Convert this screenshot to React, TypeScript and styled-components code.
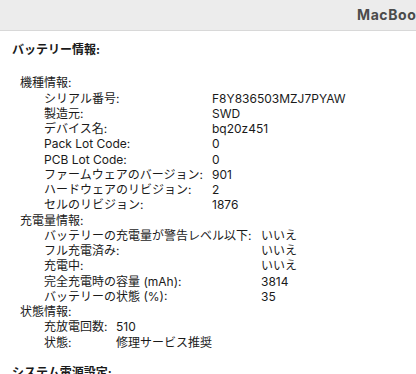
import React from "react";
import styled, { createGlobalStyle } from "styled-components";

const Global = createGlobalStyle`
  html, body { margin: 0; padding: 0; background: #ffffff; }
  body {
    font-family: "Inter", "Noto Sans CJK JP", sans-serif;
    font-size: 12px;
    color: #1a1a1a;
    -webkit-font-smoothing: antialiased;
  }
`;

const Window = styled.div`
  width: 416px;
  height: 374px;
  overflow: hidden;
  background: #ffffff;
  display: flex;
  flex-direction: column;
`;

const TitleBar = styled.div`
  flex: 0 0 30px;
  height: 30px;
  background: #ececec;
  border-bottom: 1px solid #d8d8d8;
  display: flex;
  align-items: center;
  padding-left: 357px;
  overflow: hidden;
  white-space: nowrap;
`;

const WindowTitle = styled.span`
  font-family: "Inter", "Liberation Sans", sans-serif;
  font-weight: 700;
  font-size: 14px;
  letter-spacing: 0.6px;
  color: #4b4b4b;
  margin-top: -1px;
`;

const Content = styled.div`
  padding: 11px 0 0 12px;
  line-height: 15.25px;
`;

const SectionTitle = styled.div`
  font-weight: 700;
  white-space: nowrap;
`;

const GroupList = styled.div`
  margin-top: 18px;
  padding-left: 8px;
`;

const GroupHeading = styled.div`
  white-space: nowrap;
`;

const Table = styled.div<{ $labelWidth: number }>`
  display: grid;
  grid-template-columns: ${(p) => p.$labelWidth}px auto;
  padding-left: 24px;
  white-space: nowrap;
`;

const Label = styled.div``;
const Value = styled.div``;

type Group = { heading: string; labelWidth: number; rows: [string, string][] };

const groups: Group[] = [
  {
    heading: "機種情報:",
    labelWidth: 168,
    rows: [
      ["シリアル番号:", "F8Y836503MZJ7PYAW"],
      ["製造元:", "SWD"],
      ["デバイス名:", "bq20z451"],
      ["Pack Lot Code:", "0"],
      ["PCB Lot Code:", "0"],
      ["ファームウェアのバージョン:", "901"],
      ["ハードウェアのリビジョン:", "2"],
      ["セルのリビジョン:", "1876"],
    ],
  },
  {
    heading: "充電量情報:",
    labelWidth: 217,
    rows: [
      ["バッテリーの充電量が警告レベル以下:", "いいえ"],
      ["フル充電済み:", "いいえ"],
      ["充電中:", "いいえ"],
      ["完全充電時の容量 (mAh):", "3814"],
      ["バッテリーの状態 (%):", "35"],
    ],
  },
  {
    heading: "状態情報:",
    labelWidth: 72,
    rows: [
      ["充放電回数:", "510"],
      ["状態:", "修理サービス推奨"],
    ],
  },
];

const NextSection = styled(SectionTitle)`
  margin-top: 15px;
`;

export default function App() {
  return (
    <>
      <Global />
      <Window>
        <TitleBar>
          <WindowTitle>MacBook Pro</WindowTitle>
        </TitleBar>
        <Content>
          <SectionTitle>バッテリー情報:</SectionTitle>
          <GroupList>
            {groups.map((g) => (
              <div key={g.heading}>
                <GroupHeading>{g.heading}</GroupHeading>
                <Table $labelWidth={g.labelWidth}>
                  {g.rows.map(([l, v]) => (
                    <React.Fragment key={l}>
                      <Label>{l}</Label>
                      <Value>{v}</Value>
                    </React.Fragment>
                  ))}
                </Table>
              </div>
            ))}
          </GroupList>
          <NextSection>システム電源設定:</NextSection>
        </Content>
      </Window>
    </>
  );
}
